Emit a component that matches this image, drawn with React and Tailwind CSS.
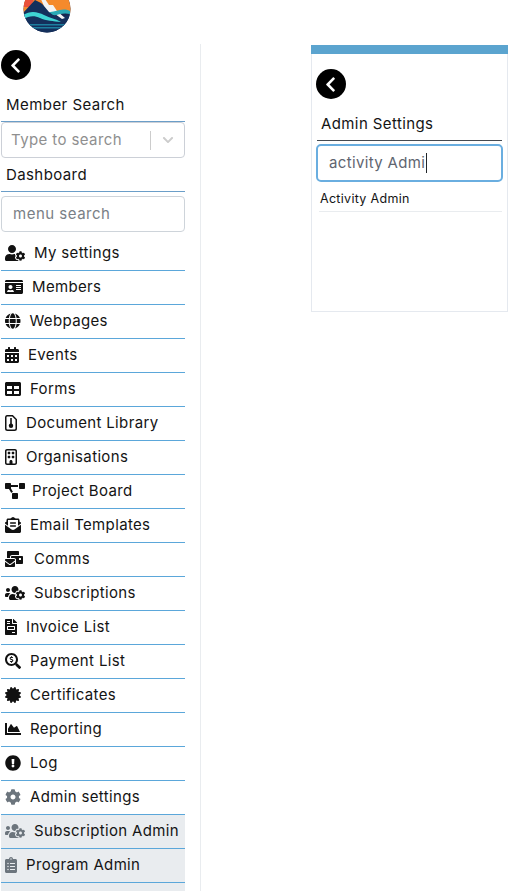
import React from "react";
import {
  FaChevronLeft, FaChevronDown, FaUserCog, FaIdCard, FaGlobe, FaCalendarAlt, FaTable,
  FaProjectDiagram, FaEnvelopeOpenText, FaMailBulk, FaUsersCog, FaFileInvoice, FaSearchDollar,
  FaCertificate, FaChartArea, FaExclamationCircle, FaCog, FaClipboardList,
} from "react-icons/fa";
import { FaRegBuilding } from "react-icons/fa6";

function DocIcon({ className }) {
  return (
    <svg viewBox="0 0 12 16" className={className}>
      <path d="M2 .75h5.500L11.250 4.500V13.500a1.750 1.750 0 0 1-1.750 1.750H2.500A1.750 1.750 0 0 1 .75 13.500V2.500A1.750 1.750 0 0 1 2 .75z" fill="none" stroke="currentColor" strokeWidth="1.500" />
      <rect x="5.200" y="3" width="1.600" height="6" fill="currentColor" />
      <circle cx="6" cy="10.800" r="2.200" fill="currentColor" />
    </svg>
  );
}

const items = [
  ["My settings", FaUserCog, "", "w-[20px]", "gap-[9px]"],
  ["Members", FaIdCard, "", "w-[18px]", "gap-[9px]"],
  ["Webpages", FaGlobe, "", "w-[15.500px]", "gap-[9px]"],
  ["Events", FaCalendarAlt, "", "w-[14px]", "gap-[9px]"],
  ["Forms", FaTable, "", "w-[16px]", "gap-[9px]"],
  ["Document Library", DocIcon, "", "w-[12px]", "gap-[9px]"],
  ["Organisations", FaRegBuilding, "", "w-[12px]", "gap-[9px]"],
  ["Project Board", FaProjectDiagram, "", "w-[20px]", "gap-[7px]"],
  ["Email Templates", FaEnvelopeOpenText, "", "w-[16px]", "gap-[9px]"],
  ["Comms", FaMailBulk, "", "w-[18px]", "gap-[11px]"],
  ["Subscriptions", FaUsersCog, "", "w-[20px]", "gap-[9px]"],
  ["Invoice List", FaFileInvoice, "", "w-[12px]", "gap-[9px]"],
  ["Payment List", FaSearchDollar, "", "w-[16px]", "gap-[9px]"],
  ["Certificates", FaCertificate, "", "w-[16px]", "gap-[9px]"],
  ["Reporting", FaChartArea, "", "w-[16px]", "gap-[9px]"],
  ["Log", FaExclamationCircle, "", "w-[16px]", "gap-[9px]"],
  ["Admin settings", FaCog, "muted", "w-[16px]", "gap-[9px]"],
  ["Subscription Admin", FaUsersCog, "admin", "w-[20px]", "gap-[9px]"],
  ["Program Admin", FaClipboardList, "admin", "w-[12px]", "gap-[9px]"],
];

function BackButton() {
  return (
    <button className="flex h-[30px] w-[30px] items-center justify-center rounded-full bg-black pr-px text-white">
      <FaChevronLeft className="h-[17px] w-[11px]" />
    </button>
  );
}

function Logo() {
  return (
    <svg viewBox="0 0 48 48" className="h-12 w-12 shrink-0">
      <defs>
        <clipPath id="logo-clip"><circle cx="24" cy="24" r="23.500" /></clipPath>
      </defs>
      <g clipPath="url(#logo-clip)">
        <rect width="48" height="48" fill="#17264f" />
        <rect width="48" height="28" fill="#f58a2c" />
        <path d="M0 0h16L8 22H0z" fill="#e8503a" />
        <path d="M38 0h10v18z" fill="#ee6a35" />
        <path d="M0 28 L12 15 L18 18 L34 32 L48 30 V48 H0z" fill="#14305c" />
        <path d="M17 12 L22 14 L26 20 L30 20 L34 26 L42 33 L39 34 L32 29 L26 27 L21 21z" fill="#f4f4f4" />
        <path d="M0 30 C8 25 15 27 21 30 C27 33 33 34 38 37 C30 36 23 36 17 33 C11 30 6 31 0 34z" fill="#3fd4d4" />
        <path d="M26 27 C32 28 38 22 47 26 L47 29 C39 27 34 31 30 30z" fill="#2aa9b5" />
        <path d="M4 39h40v1.500H4zM8 42h32v1.500H8z" fill="#1d7f9f" />
      </g>
    </svg>
  );
}

function MenuRow({ label, Icon, tone, width, gap }) {
  const bg = tone === "admin" ? "bg-[#e9ecef]" : "";
  const iconColor = tone ? "text-[#6c757d]" : "text-[#111111]";
  return (
    <div className={`flex h-[34px] shrink-0 items-center border-b border-b-[#5ba7da] pl-1 ${gap} ${bg}`}>
      <Icon className={`h-4 shrink-0 -translate-y-px ${width} ${iconColor}`} />
      <span className="text-[15px] tracking-[0.35px] text-[#141414]">{label}</span>
    </div>
  );
}

export default function App() {
  return (
    <div
      className="flex h-[891px] w-[517px] flex-col overflow-hidden bg-white text-[#141414]"
      style={{ fontFamily: "Inter, 'Noto Sans', sans-serif" }}
    >
      <header className="h-11 shrink-0 overflow-hidden pl-[23px]">
        <div className="-mt-[15px]"><Logo /></div>
      </header>

      <div className="flex min-h-0 flex-1">
        <aside className="w-[201px] shrink-0 border-r border-[#e9ecef] pl-px pt-1.5">
          <div className="w-[184px]">
            <BackButton />
            <div className="flex h-[42px] items-end border-b border-b-[#6b9ec8] pb-[5px] pl-[5px] text-[15px] tracking-[0.45px]">
              Member Search
            </div>
            <div className="flex h-9 items-center rounded border border-[#ccd0d7] pl-[9px]">
              <span className="flex-1 text-[15px] tracking-[0.4px] text-[#8f8f8f]">Type to search</span>
              <span className="h-[19px] w-px bg-[#cccccc]" />
              <span className="flex w-[33px] justify-center text-[#cccccc]"><FaChevronDown size={12} /></span>
            </div>
            <div className="flex h-[34px] items-end border-b border-b-[#6b9ec8] pb-[5px] pl-[5px] text-[15px] tracking-[0.4px]">
              Dashboard
            </div>
            <div className="mt-1 flex h-9 items-center rounded border border-[#ced4da] pl-[11px] text-[15px] tracking-[0.5px] text-[#7a7f86]">
              menu search
            </div>
            <nav className="mt-[5px] flex flex-col">
              {items.map(([label, Icon, tone, width, gap]) => (
                <MenuRow key={label} label={label} Icon={Icon} tone={tone} width={width} gap={gap} />
              ))}
              <div className="h-[34px] shrink-0 bg-[#e9ecef]" />
            </nav>
          </div>
        </aside>

        <main className="pl-[110px] pt-px">
          <section className="h-[267px] w-[197px] border border-t-0 border-[#e5e9ef]">
            <div className="-mx-px h-[9px] bg-[#5ba4cf]" />
            <div className="px-[4px] pt-[15px]">
              <BackButton />
              <div className="mx-px flex h-[42px] items-end border-b border-b-[#454b52] pb-[5px] pl-[4px] text-[15px] tracking-[0.4px]">
                Admin Settings
              </div>
              <div className="mt-[3px] flex h-[38px] w-[187px] items-center rounded-[5px] border-2 border-[#6aaee0] pl-[11px] text-[15px] tracking-[0.35px] text-[#5f6570]">
                activity Admi<span className="ml-px h-[20px] w-px bg-[#212529]" />
              </div>
              <div className="ml-[3px] mr-px flex h-[30px] items-center border-b border-b-[#e9ecef] pl-px pt-[5px] text-[12.500px] tracking-[0.3px] text-[#141414]">
                Activity Admin
              </div>
            </div>
          </section>
        </main>
      </div>
    </div>
  );
}
